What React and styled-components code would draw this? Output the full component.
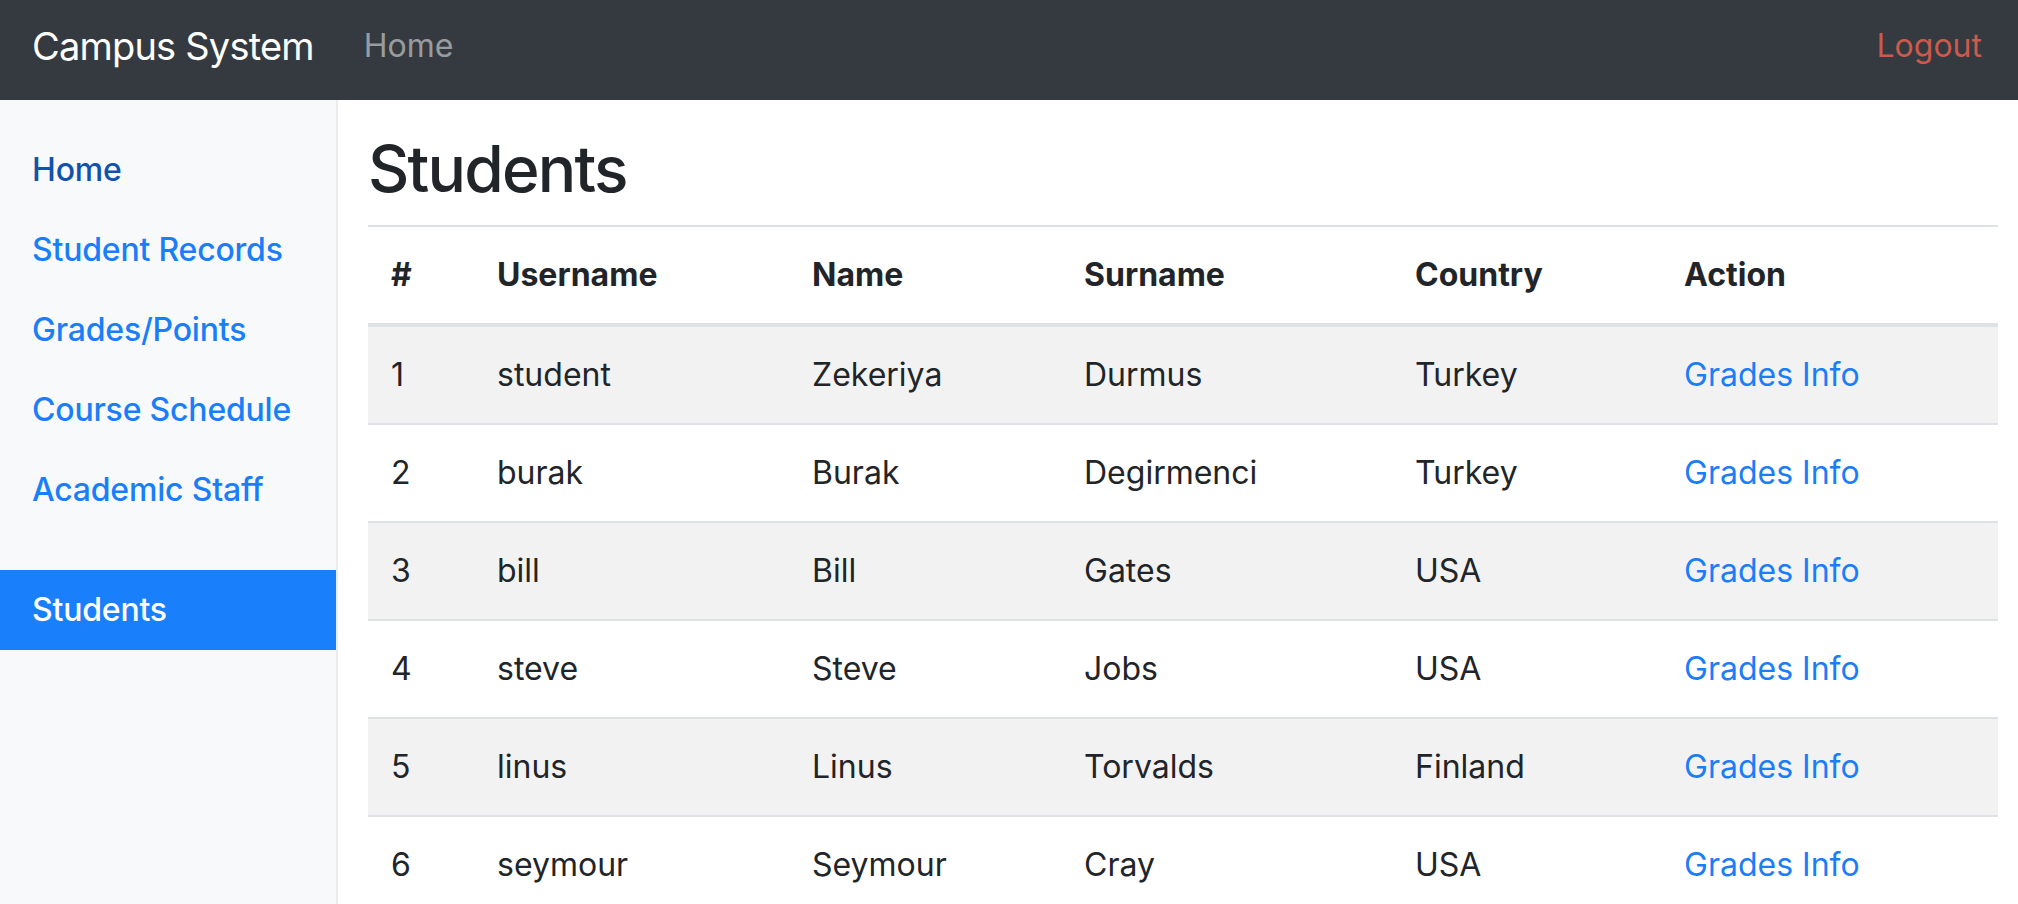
import React from "react";
import styled, { createGlobalStyle } from "styled-components";

const GlobalStyle = createGlobalStyle`
  html, body {
    margin: 0;
    padding: 0;
    background: #ffffff;
  }
  body {
    font-family: Inter, "Noto Sans", "Liberation Sans", sans-serif;
    color: #212529;
    -webkit-font-smoothing: antialiased;
  }
  * { box-sizing: border-box; }
`;

const Navbar = styled.header`
  height: 100px;
  background: #343a40;
  display: flex;
  align-items: center;
  padding: 0 36px 9px 32px;
`;

const Brand = styled.a`
  font-size: 38px;
  line-height: 60px;
  color: #ffffff;
  text-decoration: none;
  margin-right: 50px;
  letter-spacing: -0.8px;
`;

const TopLink = styled.a`
  font-size: 32px;
  line-height: 48px;
  text-decoration: none;
  color: ${(p) => (p.$danger ? "#cb5a4c" : "rgba(255,255,255,0.5)")};
  margin-left: ${(p) => (p.$push ? "auto" : "0")};
`;

const Layout = styled.div`
  display: grid;
  grid-template-columns: 338px 1fr;
  min-height: 804px;
`;

const Sidebar = styled.nav`
  background: #f8f9fa;
  border-right: 2px solid #eaecee;
  padding-top: 30px;
  display: flex;
  flex-direction: column;
`;

const SideLink = styled.a`
  display: block;
  padding: 16px 32px;
  font-size: 32px;
  line-height: 48px;
  font-weight: 500;
  letter-spacing: -0.2px;
  text-decoration: none;
  color: ${(p) => (p.$active ? "#ffffff" : p.$current ? "#1152ab" : "#1a7ef8")};
  background: ${(p) => (p.$active ? "#1a7ffb" : "transparent")};
  margin-top: ${(p) => (p.$gap ? "40px" : "0")};
`;

const Main = styled.main`
  padding: 30px 20px 0 30px;
`;

const Title = styled.h2`
  margin: 0 0 18px;
  font-size: 64px;
  line-height: 77px;
  font-weight: 500;
  color: #212529;
  letter-spacing: -1.8px;
`;

const Table = styled.table`
  width: 100%;
  border-collapse: collapse;
  table-layout: fixed;
  font-size: 32px;
  line-height: 48px;
`;

const Th = styled.th`
  text-align: left;
  padding: 24px 24px 24px 23px;
  font-weight: 700;
  border-top: 2px solid #dee2e6;
  border-bottom: 4px solid #dee2e6;
  width: ${(p) => p.$w}px;
`;

const Row = styled.tr`
  background: ${(p) => (p.$striped ? "#f2f2f2" : "#ffffff")};
`;

const Td = styled.td`
  padding: 24px 24px 24px 23px;
  border-top: 2px solid #dee2e6;
  white-space: nowrap;
`;

const ActionLink = styled.a`
  color: #1a7ef8;
  text-decoration: none;
`;

const columns = [
  { label: "#", w: 106 },
  { label: "Username", w: 315 },
  { label: "Name", w: 272 },
  { label: "Surname", w: 331 },
  { label: "Country", w: 269 },
  { label: "Action", w: 337 },
];

const students = [
  ["1", "student", "Zekeriya", "Durmus", "Turkey"],
  ["2", "burak", "Burak", "Degirmenci", "Turkey"],
  ["3", "bill", "Bill", "Gates", "USA"],
  ["4", "steve", "Steve", "Jobs", "USA"],
  ["5", "linus", "Linus", "Torvalds", "Finland"],
  ["6", "seymour", "Seymour", "Cray", "USA"],
];

const sideItems = [
  { label: "Home", current: true },
  { label: "Student Records" },
  { label: "Grades/Points" },
  { label: "Course Schedule" },
  { label: "Academic Staff" },
];

export default function App() {
  return (
    <>
      <GlobalStyle />
      <Navbar>
        <Brand href="#">Campus System</Brand>
        <TopLink href="#">Home</TopLink>
        <TopLink href="#" $danger $push>
          Logout
        </TopLink>
      </Navbar>
      <Layout>
        <Sidebar>
          {sideItems.map((it) => (
            <SideLink key={it.label} href="#" $current={it.current}>
              {it.label}
            </SideLink>
          ))}
          <SideLink href="#" $active $gap>
            Students
          </SideLink>
        </Sidebar>
        <Main>
          <Title>Students</Title>
          <Table>
            <thead>
              <tr>
                {columns.map((c) => (
                  <Th key={c.label} $w={c.w}>
                    {c.label}
                  </Th>
                ))}
              </tr>
            </thead>
            <tbody>
              {students.map((s, i) => (
                <Row key={s[0]} $striped={i % 2 === 0}>
                  {s.map((v, j) => (
                    <Td key={j}>{v}</Td>
                  ))}
                  <Td>
                    <ActionLink href="#">Grades Info</ActionLink>
                  </Td>
                </Row>
              ))}
            </tbody>
          </Table>
        </Main>
      </Layout>
    </>
  );
}
